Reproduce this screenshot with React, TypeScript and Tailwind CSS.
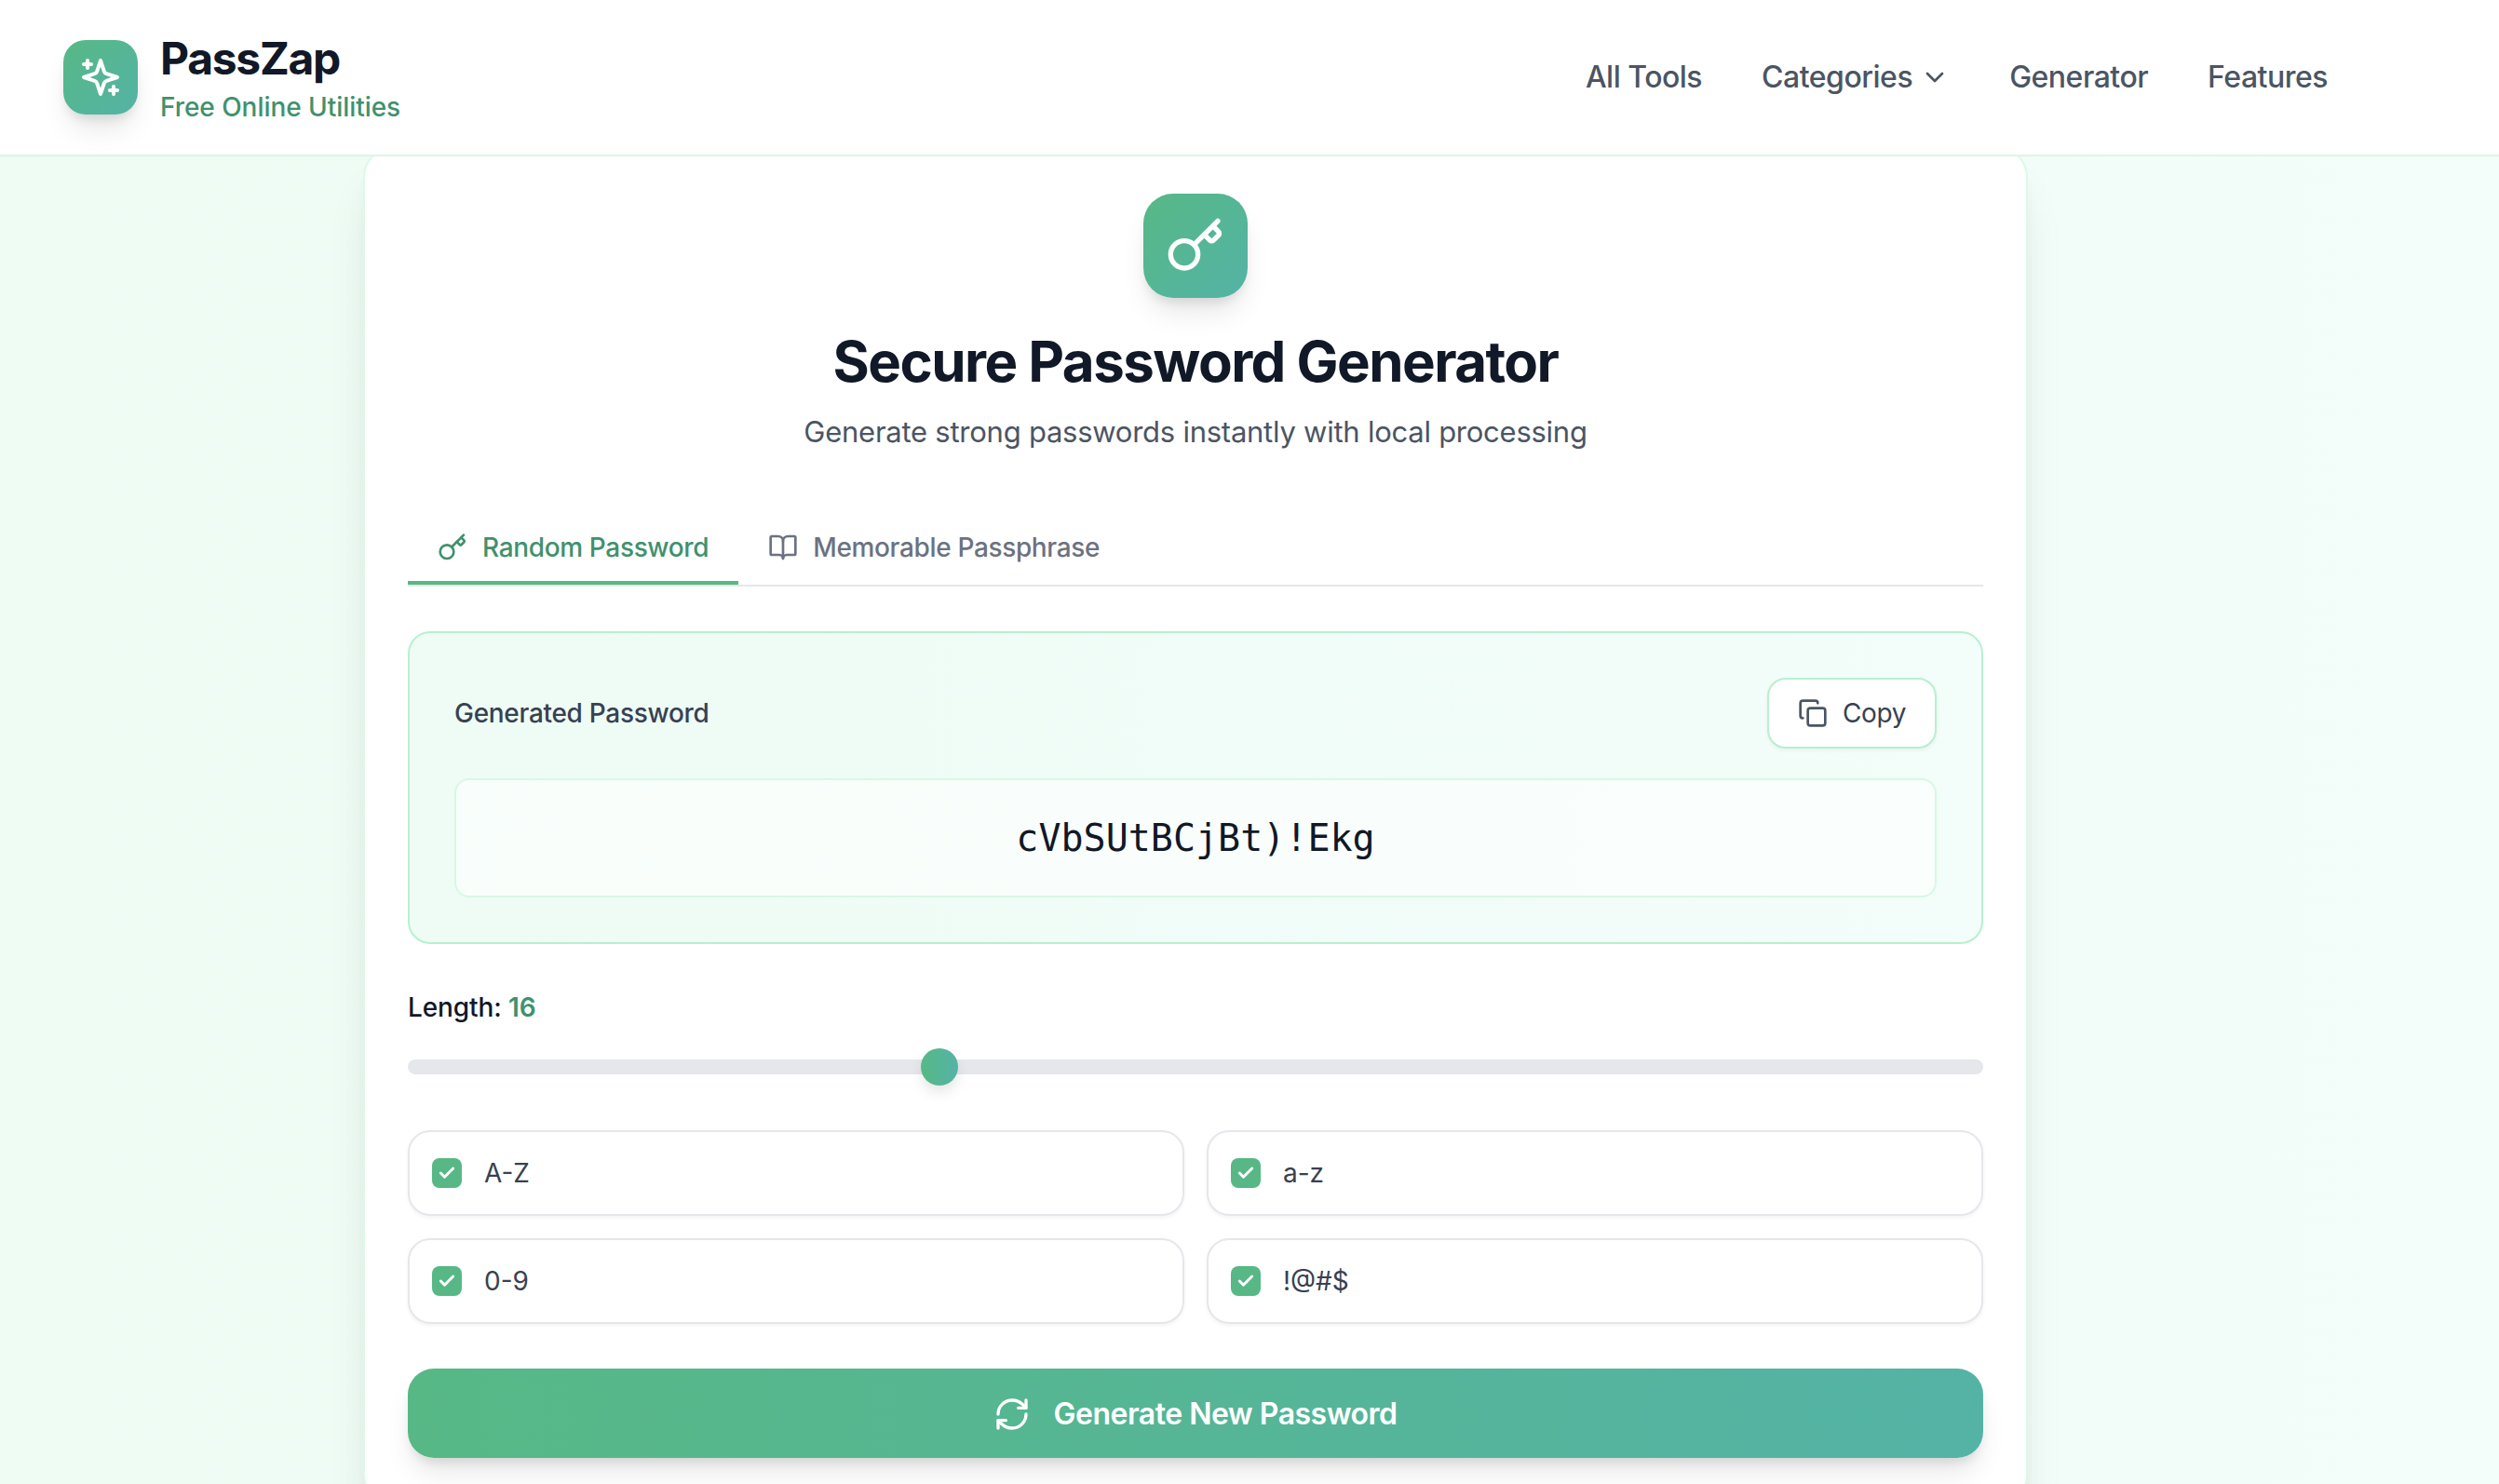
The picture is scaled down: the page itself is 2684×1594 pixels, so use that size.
import { BookOpen, Check, ChevronDown, Copy, Key, RefreshCw } from "lucide-react";

const OPTIONS = ["A-Z", "a-z", "0-9", "!@#$"];
const LENGTH = 16;
const MIN = 8;
const MAX = 32;

function Logo() {
  return (
    <div className="w-[80px] h-[80px] rounded-[24px] flex items-center justify-center bg-gradient-to-br from-[#57b886] to-[#54b3a5] shadow-[0_20px_30px_-6px_rgba(0,0,0,0.1),0_8px_12px_-4px_rgba(0,0,0,0.1)]">
      <svg width="48" height="48" viewBox="0 0 24 24" fill="none" stroke="white" strokeWidth="2" strokeLinecap="round" strokeLinejoin="round">
        <path d="m12 3-1.912 5.813a2 2 0 0 1-1.275 1.275L3 12l5.813 1.912a2 2 0 0 1 1.275 1.275L12 21l1.912-5.813a2 2 0 0 1 1.275-1.275L21 12l-5.813-1.912a2 2 0 0 1-1.275-1.275L12 3Z" />
        <path d="M5 3v4" />
        <path d="M19 17v4" />
        <path d="M3 5h4" />
        <path d="M17 19h4" />
      </svg>
    </div>
  );
}

export default function App() {
  const pos = (LENGTH - MIN) / (MAX - MIN);

  return (
    <div className="h-[1594px] overflow-hidden bg-gradient-to-r from-[#eefcf4] to-[#f3fdfa] font-['Inter',sans-serif]">
      {/* header sits over the card's top edge */}
      <header className="relative z-10 h-[168px] bg-white border-b-2 border-[#d8f8e4] pl-[68px] pr-[184px] flex items-center justify-between">
        <div className="flex items-center gap-6">
          <Logo />
          <div>
            <div className="text-[48px] leading-[64px] font-bold text-[#111827] tracking-[-1.3px]">PassZap</div>
            <div className="text-[28px] leading-[40px] font-medium text-[#40916c] tracking-[-0.05px]">Free Online Utilities</div>
          </div>
        </div>
        <nav className="flex items-center gap-16 text-[32px] leading-[48px] font-medium text-[#4b5563] tracking-[-0.5px]">
          <span>All Tools</span>
          <span className="flex items-center gap-2">
            Categories
            <ChevronDown size={32} strokeWidth={2} />
          </span>
          <span>Generator</span>
          <span>Features</span>
        </nav>
      </header>

      <main className="-mt-[10px] ml-[390px] w-[1788px] bg-white border-2 border-[#dcf9e7] rounded-[32px] px-[46px] pt-[48px] pb-12 shadow-[0_40px_50px_-10px_rgba(0,0,0,0.1),0_16px_20px_-12px_rgba(0,0,0,0.1)]">
        <div className="flex flex-col items-center">
          <div className="w-[112px] h-[112px] rounded-[32px] flex items-center justify-center bg-gradient-to-br from-[#57b886] to-[#54b3a5] shadow-[0_20px_30px_-6px_rgba(0,0,0,0.1),0_8px_12px_-4px_rgba(0,0,0,0.1)]">
            <Key size={64} color="white" strokeWidth={2} />
          </div>
          <h1 className="mt-8 text-[60px] leading-[72px] font-bold text-[#111827] tracking-[-1.55px]">Secure Password Generator</h1>
          <p className="mt-3 text-[31px] leading-[56px] text-[#4b5563] tracking-[-0.25px]">Generate strong passwords instantly with local processing</p>
        </div>

        {/* Tabs */}
        <div className="mt-[54px] flex border-b-2 border-[#e5e7eb]">
          <div className="flex items-center gap-4 px-8 h-[82px] pt-[6px] border-b-4 border-[#57b886] text-[28px] font-medium text-[#40916c] tracking-[-0.35px]">
            <Key size={32} strokeWidth={2} />
            Random Password
          </div>
          <div className="flex items-center gap-4 px-8 h-[82px] pt-[6px] border-b-4 border-transparent text-[28px] font-medium text-[#6b7280] tracking-[-0.35px]">
            <BookOpen size={32} strokeWidth={2} />
            Memorable Passphrase
          </div>
        </div>

        {/* Output */}
        <div className="mt-12 h-[336px] rounded-[24px] border-2 border-[#b7f0d0] bg-gradient-to-r from-[#eefcf5] to-[#f3fdfa] p-12">
          <div className="flex items-center justify-between">
            <span className="text-[28px] leading-[40px] font-medium text-[#374151] tracking-[-0.3px]">Generated Password</span>
            <button className="h-[76px] px-[31px] flex items-center gap-4 rounded-[20px] border-2 border-[#b7f0d0] bg-white text-[28px] text-[#374151] tracking-[-0.4px] shadow-[0_2px_4px_rgba(0,0,0,0.05)]">
              <Copy size={32} strokeWidth={2} color="#4b5563" />
              Copy
            </button>
          </div>
          <div className="mt-8 h-[128px] rounded-[16px] border-2 border-[#d8f8e4] bg-white/60 flex items-center justify-center font-['DejaVu_Sans_Mono',monospace] text-[40px] text-[#111827]">
            cVbSUtBCjBt)!Ekg
          </div>
        </div>

        {/* Length */}
        <div className="mt-12 text-[28px] leading-[40px] font-medium text-[#111827] tracking-[-0.1px]">
          Length: <span className="font-semibold text-[#40916c] tracking-normal">{LENGTH}</span>
        </div>
        <div className="mt-9 relative h-4 rounded-full bg-[#e5e7eb]">
          <div
            className="absolute top-[-12px] w-10 h-10 rounded-full bg-gradient-to-r from-[#57b886] to-[#54b3a5] shadow-[0_8px_16px_-2px_rgba(0,0,0,0.12)]"
            style={{ left: `calc((100% - 40px) * ${pos})` }}
          />
        </div>

        {/* Options */}
        <div className="mt-[60px] grid grid-cols-2 gap-6">
          {OPTIONS.map((o) => (
            <label key={o} className="h-[92px] flex items-center gap-6 px-6 rounded-[24px] border-2 border-[#e5e7eb] bg-white text-[28px] text-[#374151] shadow-[0_2px_4px_rgba(0,0,0,0.05)]">
              <span className="w-8 h-8 rounded-[8px] bg-[#57b886] flex items-center justify-center">
                <Check size={20} color="white" strokeWidth={3.5} />
              </span>
              {o}
            </label>
          ))}
        </div>

        <button className="mt-12 w-full h-[96px] pt-[2px] rounded-[28px] flex items-center justify-center gap-6 bg-gradient-to-r from-[#57b886] to-[#54b3a5] text-white text-[32px] font-semibold tracking-[-0.5px] shadow-[0_20px_30px_-6px_rgba(0,0,0,0.1),0_8px_12px_-4px_rgba(0,0,0,0.1)]">
          <RefreshCw size={40} strokeWidth={2} />
          Generate New Password
        </button>
      </main>
    </div>
  );
}
